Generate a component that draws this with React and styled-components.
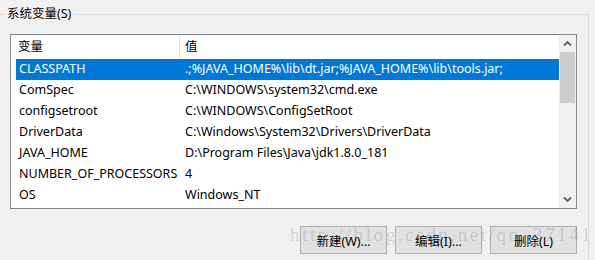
import React from 'react';
import styled, { createGlobalStyle } from 'styled-components';

const Global = createGlobalStyle`
  html, body { margin: 0; padding: 0; background: #f0f0f0; }
  body {
    width: 595px; height: 260px; overflow: hidden;
    font-family: "Noto Sans", "Noto Sans CJK SC", sans-serif;
    font-size: 12.5px; color: #000;
  }
`;

const Page = styled.div`
  position: relative;
  width: 595px;
  height: 260px;
  padding-top: 6px;
  box-sizing: border-box;
  overflow: hidden;
`;

const Group = styled.fieldset`
  margin: 0 0 0 -2px;
  width: 591px;
  height: 280px;
  min-width: 0;
  box-sizing: border-box;
  border: 1px solid #dcdcdc;
  padding: 12px 0 0 6px;
`;

const Legend = styled.legend`
  padding: 0 2px;
  line-height: 16px;
  font-size: 12.5px;
`;

const ListBox = styled.div`
  margin-left: 5px;
  width: 567px;
  height: 175px;
  box-sizing: border-box;
  border: 1px solid #828790;
  background: #fff;
  display: flex;
`;

const ListContent = styled.div`
  flex: 1;
  padding-left: 5px;
  display: flex;
  flex-direction: column;
`;

const HeaderRow = styled.div`
  display: grid;
  grid-template-columns: 164px 1fr;
  height: 24px;
  line-height: 24px;
`;

const HeaderCell = styled.div`
  padding-left: ${p => (p.$first ? '2px' : '5px')};
  border-right: ${p => (p.$first ? '1px solid #e5e5e5' : 'none')};
`;

const Row = styled.div`
  display: grid;
  grid-template-columns: 164px 1fr;
  height: 21px;
  line-height: 20px;
  background: ${p => (p.$selected ? '#0078d7' : 'transparent')};
  color: ${p => (p.$selected ? '#fff' : '#000')};
  white-space: nowrap;
`;

const Cell = styled.div`
  padding-left: ${p => (p.$first ? '3px' : '5px')};
  overflow: hidden;
`;

const ScrollBar = styled.div`
  width: 17px;
  background: #f0f0f0;
  display: flex;
  flex-direction: column;
`;

const ArrowBtn = styled.div`
  height: 17px;
  display: flex;
  align-items: center;
  justify-content: center;
`;

const Thumb = styled.div`
  height: 51px;
  margin: 0 1px;
  background: #cdcdcd;
`;

const Track = styled.div`
  flex: 1;
`;

const ButtonRow = styled.div`
  margin: 17px 0 0 5px;
  width: 567px;
  display: flex;
  justify-content: flex-end;
  gap: 8px;
`;

const Button = styled.div`
  width: 87px;
  height: 28px;
  box-sizing: border-box;
  border: 1px solid #adadad;
  background: #e1e1e1;
  display: flex;
  align-items: center;
  justify-content: center;
  font-size: 12.5px;
`;

const Watermark = styled.div`
  position: absolute;
  left: 290px;
  top: 224px;
  font-family: "Liberation Serif", serif;
  font-size: 19px;
  letter-spacing: 2.6px;
  color: rgba(0, 0, 0, 0.14);
  white-space: nowrap;
  pointer-events: none;
`;

const Chevron = ({ up }) => (
  <svg width="9" height="7" viewBox="0 0 9 7">
    <path
      d={up ? 'M1 5.5 L4.5 2 L8 5.5' : 'M1 1.5 L4.5 5 L8 1.5'}
      fill="none"
      stroke="#606060"
      strokeWidth="1.8"
    />
  </svg>
);

const rows = [
  ['CLASSPATH', '.;%JAVA_HOME%\\lib\\dt.jar;%JAVA_HOME%\\lib\\tools.jar;'],
  ['ComSpec', 'C:\\WINDOWS\\system32\\cmd.exe'],
  ['configsetroot', 'C:\\WINDOWS\\ConfigSetRoot'],
  ['DriverData', 'C:\\Windows\\System32\\Drivers\\DriverData'],
  ['JAVA_HOME', 'D:\\Program Files\\Java\\jdk1.8.0_181'],
  ['NUMBER_OF_PROCESSORS', '4'],
  ['OS', 'Windows_NT'],
];

export default function App() {
  return (
    <Page>
      <Global />
      <Group>
        <Legend>系统变量(S)</Legend>
        <ListBox>
          <ListContent>
            <HeaderRow>
              <HeaderCell $first>变量</HeaderCell>
              <HeaderCell>值</HeaderCell>
            </HeaderRow>
            {rows.map(([k, v], i) => (
              <Row key={k} $selected={i === 0}>
                <Cell $first>{k}</Cell>
                <Cell>{v}</Cell>
              </Row>
            ))}
          </ListContent>
          <ScrollBar>
            <ArrowBtn><Chevron up /></ArrowBtn>
            <Thumb />
            <Track />
            <ArrowBtn><Chevron /></ArrowBtn>
          </ScrollBar>
        </ListBox>
        <ButtonRow>
          <Button>新建(W)...</Button>
          <Button>编辑(I)...</Button>
          <Button>删除(L)</Button>
        </ButtonRow>
      </Group>
      <Watermark>http://blog.csdn.net/qq_37141</Watermark>
    </Page>
  );
}
